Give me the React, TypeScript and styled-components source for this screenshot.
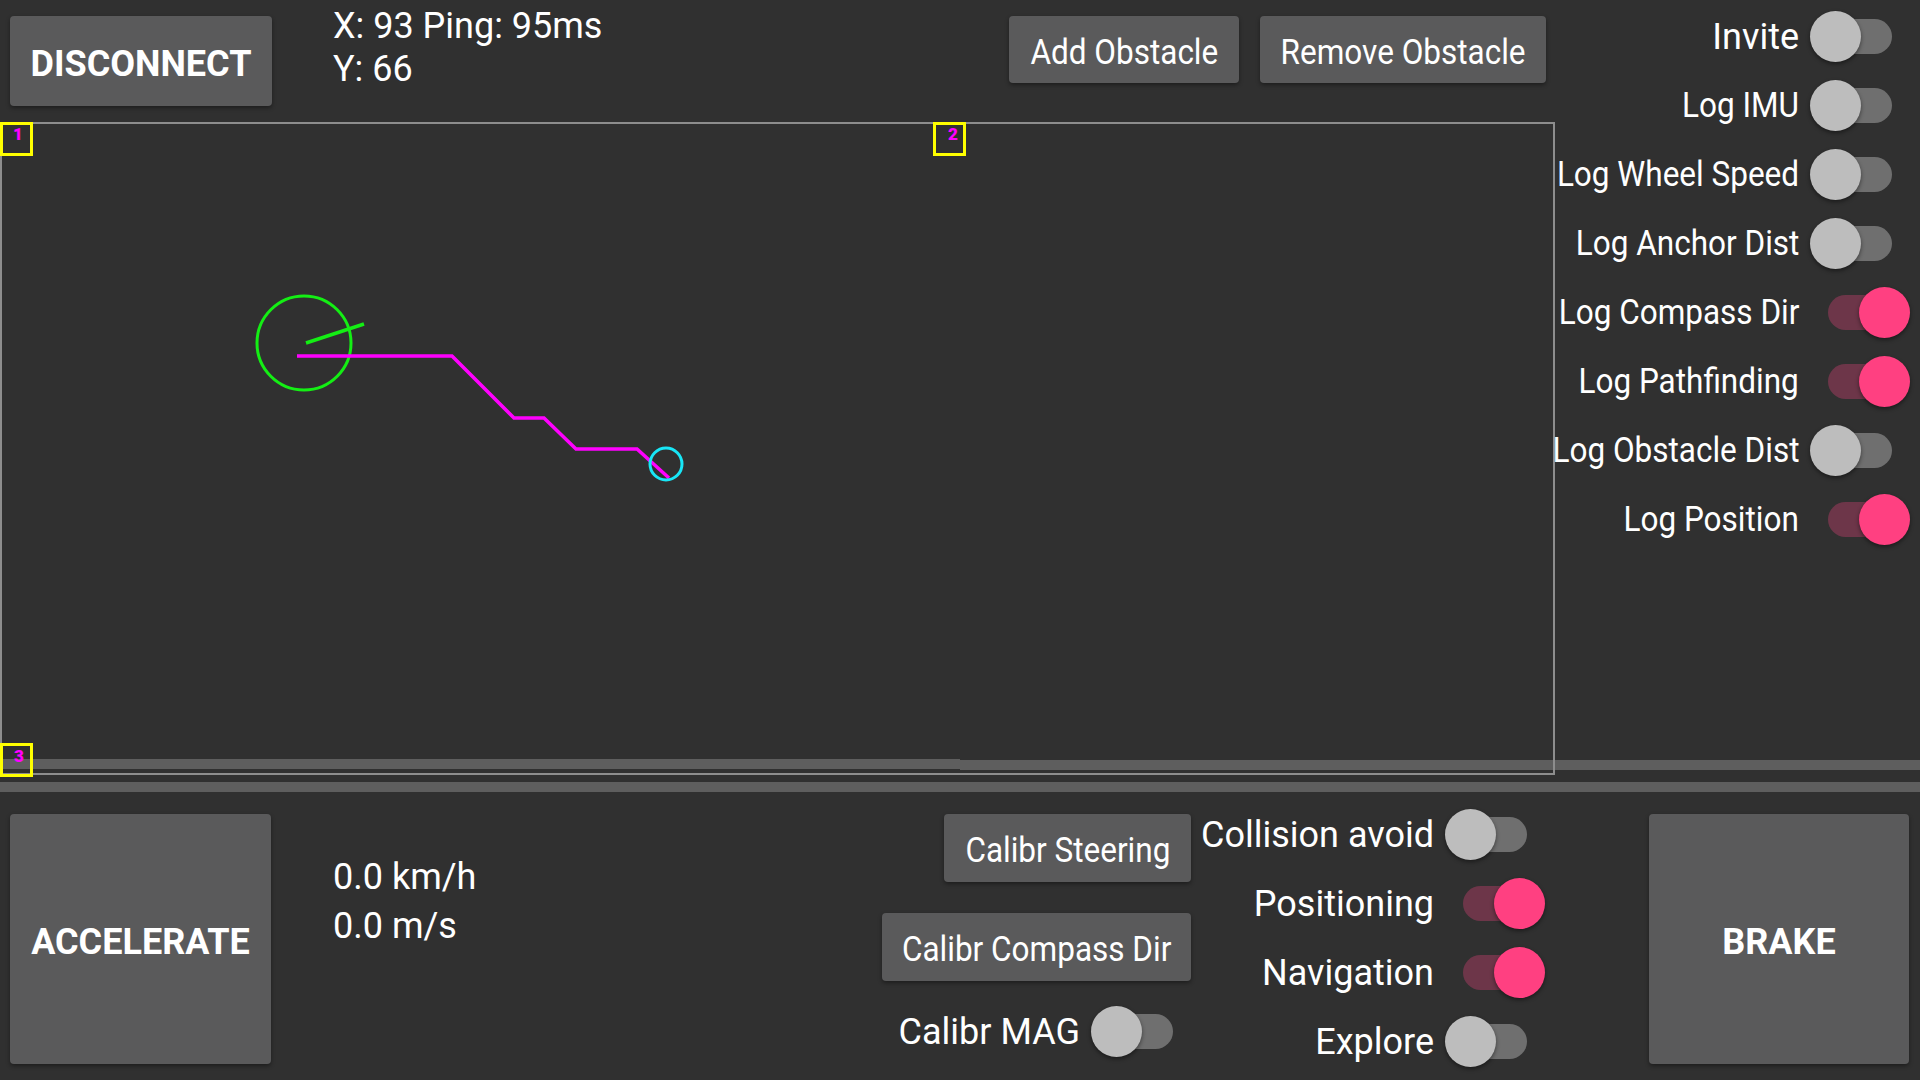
import React from "react";
import styled, { createGlobalStyle } from "styled-components";

const GlobalStyle = createGlobalStyle`
  * { box-sizing: border-box; }
  html, body { margin: 0; padding: 0; background: #303030; }
  body {
    font-family: Roboto, "Noto Sans", sans-serif;
    color: #ffffff;
    overflow: hidden;
  }
  #root { width: 1920px; height: 1080px; }
`;

const Screen = styled.div`
  width: 1920px;
  height: 1080px;
  background: #303030;
  display: flex;
  flex-direction: column;
  overflow: hidden;
`;

const TopArea = styled.div`
  position: relative;
  height: 776px;
  display: flex;
  flex-shrink: 0;
`;

const Strip = styled.div<{ $left: number; $top: number; $width: number }>`
  position: absolute;
  left: ${(p) => p.$left}px;
  top: ${(p) => p.$top}px;
  width: ${(p) => p.$width}px;
  height: 10px;
  background: #5e5e5e;
`;

const LeftCol = styled.div`
  width: 1556px;
  flex-shrink: 0;
  display: flex;
  flex-direction: column;
`;

const Header = styled.div`
  height: 122px;
  display: flex;
  align-items: flex-start;
  padding: 0 10px;
`;

const ActionButton = styled.button<{ $w: number; $h: number; $mt?: number }>`
  width: ${(p) => p.$w}px;
  height: ${(p) => p.$h}px;
  margin-top: ${(p) => p.$mt ?? 0}px;
  flex-shrink: 0;
  padding: 5px 0 0 0;
  border: none;
  border-radius: 4px;
  background: #5a5a5b;
  box-shadow: 0 2px 4px rgba(0, 0, 0, 0.4);
  color: #ffffff;
  font-family: Roboto, "Noto Sans", sans-serif;
  display: flex;
  align-items: center;
  justify-content: center;
  cursor: pointer;
`;

const BoldLabel = styled.span`
  font-size: 36px;
  font-weight: 700;
  white-space: nowrap;
`;

const NarrowLabel = styled.span<{ $origin?: string }>`
  display: inline-block;
  font-size: 35px;
  font-weight: 400;
  white-space: nowrap;
  transform: scaleX(0.9);
  transform-origin: ${(p) => p.$origin ?? "center"} center;
`;

const PlainLabel = styled.span`
  font-size: 36px;
  white-space: nowrap;
`;

const StatusText = styled.div<{ $ml: number; $mt: number; $lh: number }>`
  margin-left: ${(p) => p.$ml}px;
  margin-top: ${(p) => p.$mt}px;
  font-size: 36px;
  line-height: ${(p) => p.$lh}px;
  white-space: nowrap;
`;

const ButtonGroup = styled.div`
  margin-left: auto;
  margin-top: 16px;
  display: flex;
  gap: 21px;
`;

const MapPanel = styled.div`
  position: relative;
  width: 1555px;
  height: 653px;
  border: 2px solid #8d8d8d;
`;

const MapDrawing = styled.svg`
  position: absolute;
  left: -2px;
  top: -2px;
  width: 1555px;
  height: 653px;
  overflow: visible;
`;

const RightPanel = styled.div`
  flex: 1;
  min-width: 0;
  display: flex;
  flex-direction: column;
  align-items: stretch;
  padding: 2px 10px 0 0;
`;

const ToggleRow = styled.div`
  height: 69px;
  display: flex;
  align-items: center;
  justify-content: flex-end;
  gap: 11px;
`;

const SwitchBox = styled.div`
  position: relative;
  width: 100px;
  height: 52px;
  flex-shrink: 0;
`;

const Track = styled.div<{ $on: boolean }>`
  position: absolute;
  left: 18px;
  top: 8px;
  width: 64px;
  height: 35px;
  border-radius: 18px;
  background: ${(p) => (p.$on ? "#6d3649" : "#6f6f6f")};
`;

const Thumb = styled.div<{ $on: boolean }>`
  position: absolute;
  top: 0;
  left: ${(p) => (p.$on ? 49 : 0)}px;
  width: 51px;
  height: 51px;
  border-radius: 50%;
  background: ${(p) => (p.$on ? "#ff4081" : "#bdbdbd")};
  box-shadow: 0 2px 4px rgba(0, 0, 0, 0.45);
`;

const Divider = styled.div`
  height: 10px;
  margin-top: 6px;
  background: #5e5e5e;
  flex-shrink: 0;
`;

const Bottom = styled.div`
  flex: 1;
  display: flex;
  align-items: flex-start;
  padding: 8px 11px 0 10px;
`;

const CalibColumn = styled.div`
  margin-left: auto;
  margin-top: 14px;
  display: flex;
  flex-direction: column;
  align-items: flex-end;
`;

const ToggleColumn = styled.div`
  margin-left: 10px;
  display: flex;
  flex-direction: column;
  align-items: flex-end;
`;

const Spaced = styled.div<{ $mt: number }>`
  margin-top: ${(p) => p.$mt}px;
`;

const BrakeWrap = styled.div`
  margin-left: 104px;
`;

type SwitchProps = { on: boolean };
const Switch: React.FC<SwitchProps> = ({ on }) => (
  <SwitchBox>
    <Track $on={on} />
    <Thumb $on={on} />
  </SwitchBox>
);

const rightToggles: [string, boolean, boolean][] = [
  ["Invite", false, false],
  ["Log IMU", false, true],
  ["Log Wheel Speed", false, true],
  ["Log Anchor Dist", false, true],
  ["Log Compass Dir", true, true],
  ["Log Pathfinding", true, true],
  ["Log Obstacle Dist", false, true],
  ["Log Position", true, true],
];

const bottomToggles: [string, boolean][] = [
  ["Collision avoid", false],
  ["Positioning", true],
  ["Navigation", true],
  ["Explore", false],
];

const anchors = [
  { x: 0, y: 0, label: "1", lx: 18, ly: 18 },
  { x: 933, y: 0, label: "2", lx: 953, ly: 18 },
  { x: 0, y: 621, label: "3", lx: 19, ly: 640 },
];

export default function App() {
  return (
    <Screen>
      <GlobalStyle />
      <TopArea>
        <Strip $left={0} $top={759} $width={960} />
        <Strip $left={960} $top={760} $width={960} />
        <LeftCol>
          <Header>
            <ActionButton $w={262} $h={90} $mt={16}>
              <BoldLabel>DISCONNECT</BoldLabel>
            </ActionButton>
            <StatusText $ml={61} $mt={5} $lh={43}>
              X: 93 Ping: 95ms
              <br />
              Y: 66
            </StatusText>
            <ButtonGroup>
              <ActionButton $w={230} $h={67}>
                <NarrowLabel>Add Obstacle</NarrowLabel>
              </ActionButton>
              <ActionButton $w={286} $h={67}>
                <NarrowLabel>Remove Obstacle</NarrowLabel>
              </ActionButton>
            </ButtonGroup>
          </Header>
          <MapPanel>
            <MapDrawing viewBox="0 0 1555 653">
              {anchors.map((a) => (
                <g key={a.label}>
                  <rect
                    x={a.x + 1.5}
                    y={a.y + 1.5}
                    width={30}
                    height={31}
                    fill="none"
                    stroke="#ffff00"
                    strokeWidth={3}
                  />
                  <text
                    x={a.lx}
                    y={a.ly}
                    fill="#ff00ff"
                    fontFamily="Roboto, sans-serif"
                    fontWeight={900}
                    fontSize={17}
                    textAnchor="middle"
                  >
                    {a.label}
                  </text>
                </g>
              ))}
              <circle cx={304} cy={221} r={47} fill="none" stroke="#14ee14" strokeWidth={3} />
              <line x1={306} y1={221} x2={364} y2={202} stroke="#14ee14" strokeWidth={3.5} />
              <polyline
                points="297,234 452,234 514,296 544,296 576,327 637,327 669,356"
                fill="none"
                stroke="#ff00ff"
                strokeWidth={3.5}
              />
              <circle cx={666} cy={342} r={16} fill="none" stroke="#18e6f6" strokeWidth={3} />
            </MapDrawing>
          </MapPanel>
        </LeftCol>
        <RightPanel>
          {rightToggles.map(([label, on, narrow]) => (
            <ToggleRow key={label}>
              {narrow ? (
                <NarrowLabel $origin="right">{label}</NarrowLabel>
              ) : (
                <PlainLabel>{label}</PlainLabel>
              )}
              <Switch on={on} />
            </ToggleRow>
          ))}
        </RightPanel>
      </TopArea>
      <Divider />
      <Bottom>
        <ActionButton $w={261} $h={250} $mt={14}>
          <BoldLabel>ACCELERATE</BoldLabel>
        </ActionButton>
        <StatusText $ml={62} $mt={53} $lh={49}>
          0.0 km/h
          <br />
          0.0 m/s
        </StatusText>
        <CalibColumn>
          <ActionButton $w={247} $h={68}>
            <NarrowLabel>Calibr Steering</NarrowLabel>
          </ActionButton>
          <Spaced $mt={31}>
            <ActionButton $w={309} $h={68}>
              <NarrowLabel>Calibr Compass Dir</NarrowLabel>
            </ActionButton>
          </Spaced>
          <Spaced $mt={16}>
            <ToggleRow>
              <PlainLabel>Calibr MAG</PlainLabel>
              <Switch on={false} />
            </ToggleRow>
          </Spaced>
        </CalibColumn>
        <ToggleColumn>
          {bottomToggles.map(([label, on]) => (
            <ToggleRow key={label}>
              <PlainLabel>{label}</PlainLabel>
              <Switch on={on} />
            </ToggleRow>
          ))}
        </ToggleColumn>
        <BrakeWrap>
          <ActionButton $w={260} $h={250} $mt={14}>
            <BoldLabel>BRAKE</BoldLabel>
          </ActionButton>
        </BrakeWrap>
      </Bottom>
    </Screen>
  );
}
